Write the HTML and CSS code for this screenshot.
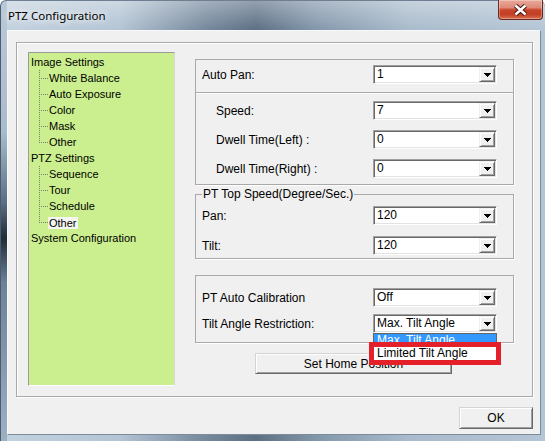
FILE: index.html
```html
<!DOCTYPE html>
<html lang="en">
<head>
  <meta charset="UTF-8" />
  <title>PTZ Configuration</title>
  <link rel="stylesheet" href="styles.css">
</head>
<body>
  <div class="window">
    <div class="titlebar">
      <span class="title">PTZ Configuration</span>
      <span class="close-btn">
        <svg width="45" height="20" viewBox="0 0 45 20">
          <path d="M17.5 5.5 L27.5 14.5 M27.5 5.5 L17.5 14.5" stroke="#4a1a12" stroke-width="4.4" fill="none"/>
          <path d="M17.5 5.5 L27.5 14.5 M27.5 5.5 L17.5 14.5" stroke="#fff" stroke-width="2.4" fill="none"/>
        </svg>
      </span>
    </div>

    <div class="client">
      <div class="frame">
        <ul class="tree">
          <li>
            <span class="node">Image Settings</span>
            <ul class="branch">
              <li>White Balance</li>
              <li>Auto Exposure</li>
              <li>Color</li>
              <li>Mask</li>
              <li>Other</li>
            </ul>
          </li>
          <li>
            <span class="node">PTZ Settings</span>
            <ul class="branch">
              <li>Sequence</li>
              <li>Tour</li>
              <li>Schedule</li>
              <li><span class="selected">Other</span></li>
            </ul>
          </li>
          <li><span class="node">System Configuration</span></li>
        </ul>

        <div class="settings">
          <div class="group pan-group">
            <div class="row head">
              <span class="label">Auto Pan:</span>
              <div class="combo"><span class="value">1</span><span class="arrow"><svg class="tri" width="7" height="4" viewBox="0 0 7 4"><path d="M0 0h7v1h-1v1h-1v1h-1v1h-1v-1h-1v-1h-1v-1h-1z"/></svg></span></div>
            </div>
            <div class="sub">
              <div class="row indent">
                <span class="label">Speed:</span>
                <div class="combo"><span class="value">7</span><span class="arrow"><svg class="tri" width="7" height="4" viewBox="0 0 7 4"><path d="M0 0h7v1h-1v1h-1v1h-1v1h-1v-1h-1v-1h-1v-1h-1z"/></svg></span></div>
              </div>
              <div class="row indent">
                <span class="label">Dwell Time(Left) :</span>
                <div class="combo"><span class="value">0</span><span class="arrow"><svg class="tri" width="7" height="4" viewBox="0 0 7 4"><path d="M0 0h7v1h-1v1h-1v1h-1v1h-1v-1h-1v-1h-1v-1h-1z"/></svg></span></div>
              </div>
              <div class="row indent">
                <span class="label">Dwell Time(Right) :</span>
                <div class="combo"><span class="value">0</span><span class="arrow"><svg class="tri" width="7" height="4" viewBox="0 0 7 4"><path d="M0 0h7v1h-1v1h-1v1h-1v1h-1v-1h-1v-1h-1v-1h-1z"/></svg></span></div>
              </div>
            </div>
          </div>

          <fieldset class="speed-group">
            <legend>PT Top Speed(Degree/Sec.)</legend>
            <div class="row">
              <span class="label">Pan:</span>
              <div class="combo"><span class="value">120</span><span class="arrow"><svg class="tri" width="7" height="4" viewBox="0 0 7 4"><path d="M0 0h7v1h-1v1h-1v1h-1v1h-1v-1h-1v-1h-1v-1h-1z"/></svg></span></div>
            </div>
            <div class="row">
              <span class="label">Tilt:</span>
              <div class="combo"><span class="value">120</span><span class="arrow"><svg class="tri" width="7" height="4" viewBox="0 0 7 4"><path d="M0 0h7v1h-1v1h-1v1h-1v1h-1v-1h-1v-1h-1v-1h-1z"/></svg></span></div>
            </div>
          </fieldset>

          <div class="group calib-group">
            <div class="row">
              <span class="label">PT Auto Calibration</span>
              <div class="combo"><span class="value">Off</span><span class="arrow"><svg class="tri" width="7" height="4" viewBox="0 0 7 4"><path d="M0 0h7v1h-1v1h-1v1h-1v1h-1v-1h-1v-1h-1v-1h-1z"/></svg></span></div>
            </div>
            <div class="row">
              <span class="label">Tilt Angle Restriction:</span>
              <div class="combo">
                <span class="value">Max. Tilt Angle</span><span class="arrow"><svg class="tri" width="7" height="4" viewBox="0 0 7 4"><path d="M0 0h7v1h-1v1h-1v1h-1v1h-1v-1h-1v-1h-1v-1h-1z"/></svg></span>
                <ul class="dropdown">
                  <li class="hl">Max. Tilt Angle</li>
                  <li class="marked">Limited Tilt Angle</li>
                </ul>
              </div>
            </div>
          </div>

          <div class="home-row">
            <button class="btn home-btn">Set Home Position</button>
          </div>
        </div>
      </div>

      <div class="footer">
        <button class="btn ok-btn">OK</button>
      </div>
    </div>
  </div>
</body>
</html>
```

FILE: styles.css
```css
* {
  box-sizing: border-box;
}

html,
body {
  margin: 0;
  padding: 0;
}

body {
  width: 545px;
  height: 441px;
  overflow: hidden;
  font-family: "Liberation Sans", Arial, sans-serif;
  font-size: 12px;
  color: #000;
  background: #fff;
}

/* window chrome */
.window {
  width: 545px;
  height: 441px;
  padding: 0 4px 6px 7px;
  display: flex;
  flex-direction: column;
  border-radius: 6px 6px 0 0;
  background:
    linear-gradient(to bottom, #b9c9d8 0, #a9bccd 30%, #5a6e82 46%, #1f2c39 54%, #6b8197 64%, #9db1c4 100%) left top / 7px 100% no-repeat,
    linear-gradient(to bottom, rgba(255, 255, 255, 0.35), rgba(255, 255, 255, 0) 30px),
    linear-gradient(to right, #c4d2df 0, #b3c4d4 22%, #74879b 38%, #5c6f83 47%, #8397ab 58%, #a9bbcc 75%, #b4c5d5 100%);
  box-shadow: inset 1px 0 #4c5c6c, inset 0 1px #6d7f91;
}

.titlebar {
  height: 30px;
  flex: none;
  display: flex;
  justify-content: space-between;
  align-items: flex-start;
  margin-right: -2px;
}

.title {
  padding: 8px 0 0 1px;
  line-height: 16px;
  font-family: "Noto Sans", "Liberation Sans", sans-serif;
  font-size: 11.5px;
  text-shadow: 0 0 6px #fff, 0 0 10px rgba(255, 255, 255, 0.8);
}

.close-btn {
  width: 45px;
  height: 20px;
  display: block;
  border: 1px solid #6a2a1f;
  border-top: none;
  border-radius: 0 0 4px 4px;
  background: linear-gradient(to bottom, #e9a99b 0%, #dd8a78 40%, #c8452c 52%, #c23e24 75%, #d9704f 100%);
  box-shadow: inset 0 0 0 1px rgba(255, 255, 255, 0.3);
  overflow: hidden;
}

.close-btn svg {
  display: block;
  margin: 0 0 0 -1px;
}

.client {
  flex: 1;
  background: #f0f0f0;
  border: 1px solid;
  border-color: #f7f9fb #7d8c9a #7d8c9a #f7f9fb;
  padding: 11px 7px 5px 8px;
}

.frame {
  display: flex;
  height: 355px;
  border: 1px solid #a9a9a9;
  box-shadow: inset 1px 1px #fff, 1px 1px #fff;
  padding: 9px 0 10px 11px;
}

/* tree */
.tree,
.tree ul {
  list-style: none;
  margin: 0;
  padding: 0;
}

.tree {
  flex: none;
  width: 147px;
  height: 334px;
  padding: 1px 0 0 2px;
  background: #cbef8f;
  border: 1px solid;
  border-color: #9b9b9b #d8d8d8 #fff #9b9b9b;
  font-size: 11px;
  white-space: nowrap;
}

.tree .node {
  display: block;
  height: 16px;
  line-height: 16px;
}

.branch li {
  position: relative;
  height: 16px;
  line-height: 16px;
  padding-left: 18px;
}

.branch li::before {
  content: "";
  position: absolute;
  left: 8px;
  top: 0;
  width: 1px;
  height: 16px;
  background: repeating-linear-gradient(to bottom, #7c7c7c 0 1px, transparent 1px 2px);
}

.branch li:last-child::before {
  height: 9px;
}

.branch li::after {
  content: "";
  position: absolute;
  left: 10px;
  top: 8px;
  width: 7px;
  height: 1px;
  background: repeating-linear-gradient(to right, #7c7c7c 0 1px, transparent 1px 2px);
}

.selected {
  display: inline-block;
  vertical-align: middle;
  line-height: 12px;
  padding: 0 1px;
  margin-left: -1px;
  background: #f4f6f1;
}

/* settings */
.settings {
  flex: none;
  width: 319px;
  margin-left: 20px;
  padding-top: 7px;
}

.group {
  border: 1px solid #a9a9a9;
  box-shadow: 1px 1px #fff;
}

.row {
  display: grid;
  grid-template-columns: 177px 124px;
  align-items: center;
}

.row .label {
  padding-left: 6px;
  white-space: nowrap;
}

.row.indent .label {
  padding-left: 20px;
}

.pan-group .head {
  padding: 5px 0 8px;
  border-bottom: 1px solid #a9a9a9;
  box-shadow: 0 1px #fff;
}

.pan-group .sub {
  display: flex;
  flex-direction: column;
  gap: 10px;
  padding: 8px 0 6px;
}

.speed-group {
  margin: 2px 0 0;
  padding: 5px 0 3px;
  min-width: 0;
  border: 1px solid #a9a9a9;
  box-shadow: 1px 1px #fff;
}

.speed-group legend {
  margin-left: 6px;
  padding: 0 1px;
  line-height: 14px;
  font-size: 12px;
}

.speed-group .row + .row {
  margin-top: 11px;
}

.calib-group {
  margin-top: 16px;
  padding: 12px 0 9px;
}

.calib-group .row + .row {
  margin-top: 7px;
}

/* combo box */
.combo {
  position: relative;
  display: flex;
  width: 124px;
  height: 19px;
  padding: 1px;
  background: #fff;
  border: 1px solid;
  border-color: #a0a0a0 #fff #fff #a0a0a0;
  box-shadow: inset 1px 1px #696969, inset -1px -1px #e3e3e3;
}

.combo .value {
  flex: 1;
  padding-left: 2px;
  line-height: 15px;
  white-space: nowrap;
  overflow: hidden;
}

.combo .arrow {
  flex: none;
  width: 16px;
  height: 15px;
  display: flex;
  align-items: center;
  justify-content: center;
  padding-top: 1px;
  background: #f0f0f0;
  border: 1px solid;
  border-color: #f0f0f0 #696969 #696969 #f0f0f0;
  box-shadow: inset 1px 1px #fff, inset -1px -1px #a0a0a0;
}

.tri {
  display: block;
  fill: #000;
  shape-rendering: crispEdges;
}

.dropdown {
  position: absolute;
  z-index: 2;
  left: -1px;
  top: calc(100% + 1px);
  width: 124px;
  margin: 0;
  padding: 0;
  list-style: none;
  background: #fff;
  border: 1px solid #646464;
}

.dropdown li {
  height: 13px;
  line-height: 13px;
  padding-left: 3px;
  white-space: nowrap;
  overflow: hidden;
}

.dropdown .hl {
  background: #3399ff;
  color: #fff;
}

.dropdown .marked {
  background: #fff;
  outline: 5px solid #e4202a;
}

/* buttons */
.btn {
  font-family: inherit;
  font-size: 12px;
  color: #000;
  background: #f0f0f0;
  padding: 0;
  border: 1px solid;
  border-color: #d4d4d4 #696969 #696969 #d4d4d4;
  box-shadow: inset 1px 1px #fff, inset -1px -1px #a0a0a0;
}

.home-row {
  margin-top: 10px;
}

.home-btn {
  width: 197px;
  height: 21px;
  margin-left: 60px;
}

.footer {
  display: flex;
  justify-content: flex-end;
  padding-top: 10px;
}

.ok-btn {
  width: 74px;
  height: 22px;
}
```
